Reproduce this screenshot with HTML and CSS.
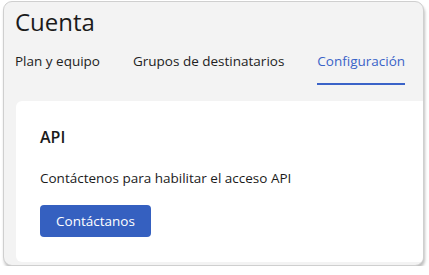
FILE: index.html
```html
<!DOCTYPE html>
<html lang="es">
<head>
    <meta charset="UTF-8">
    <meta name="viewport" content="width=device-width, initial-scale=1.0">
    <title>Cuenta</title>
    <link rel="stylesheet" href="styles.css">
</head>
<body>
    <div class="window">
        <h1 class="title">Cuenta</h1>
        <nav class="tabs">
            <a class="tab">Plan y equipo</a>
            <a class="tab">Grupos de destinatarios</a>
            <a class="tab active">Configuración</a>
        </nav>
        <section class="card">
            <h2>API</h2>
            <p>Contáctenos para habilitar el acceso API</p>
            <button class="btn">Contáctanos</button>
        </section>
    </div>
</body>
</html>
```

FILE: styles.css
```css
* {
    box-sizing: border-box;
}

body {
    margin: 0;
    background: #ffffff;
    font-family: 'Open Sans', 'Noto Sans', sans-serif;
    color: #1b1b1b;
}

.window {
    margin: 1px 0 0 3px;
    width: 421px;
    height: 265px;
    background: #f3f3f3;
    border: 1px solid #cfcfcf;
    border-radius: 9px;
    box-shadow: 1px 3px 3px rgba(0, 0, 0, 0.25);
    overflow: hidden;
    padding: 0 0 0 11px;
}

.title {
    margin: 3px 0 0 0;
    font-size: 24px;
    font-weight: 400;
    line-height: 34px;
}

.tabs {
    display: flex;
    gap: 33px;
    margin-top: 12px;
    height: 50px;
}

.tab {
    font-size: 13.5px;
    line-height: 20px;
    color: #222;
    height: 34px;
}

.tab.active {
    color: #3a63c8;
    border-bottom: 2px solid #3a63c8;
}

.card {
    background: #ffffff;
    border-radius: 6px 0 0 6px;
    margin-left: 1px;
    padding: 25px 0 0 24px;
    height: 161px;
}

.card h2 {
    margin: 0;
    font-size: 16px;
    font-weight: 600;
    line-height: 22px;
}

.card p {
    margin: 20px 0 0 0;
    font-size: 13.5px;
    line-height: 20px;
}

.btn {
    margin-top: 17px;
    width: 111px;
    height: 32px;
    background: #3560c0;
    color: #ffffff;
    border: none;
    border-radius: 4px;
    font-family: inherit;
    font-size: 13.5px;
}
```
